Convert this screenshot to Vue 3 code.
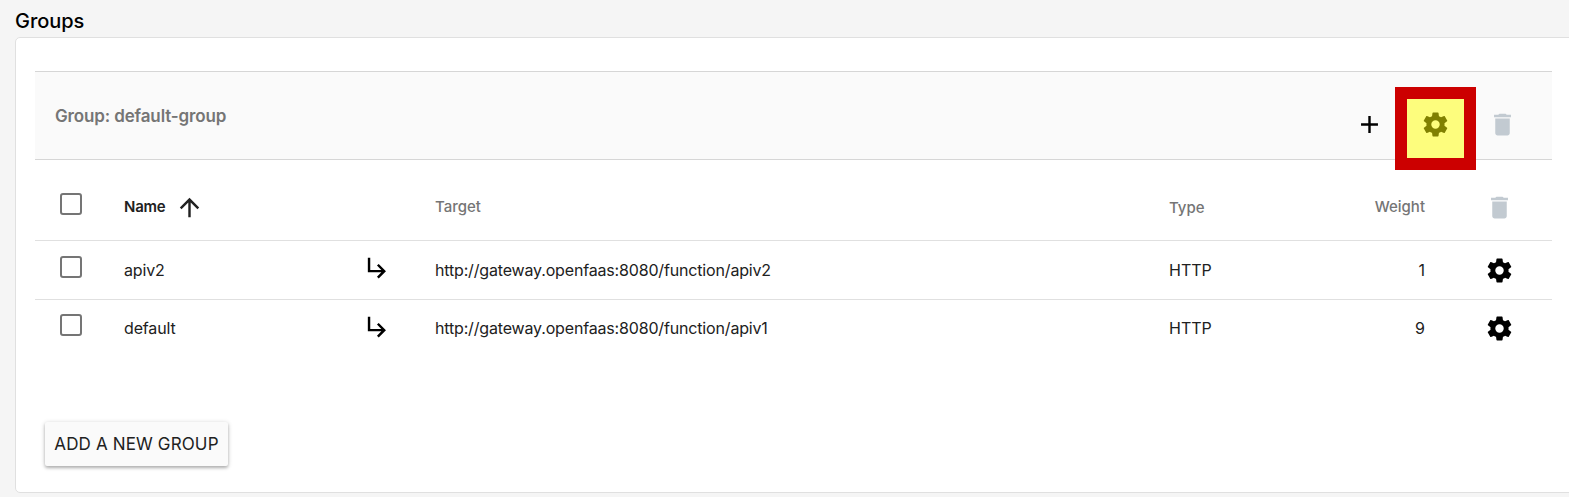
<script setup>
const icons = {
  plus: 'M19 13h-6v6h-2v-6H5v-2h6V5h2v6h6v2z',
  trash: 'M6 19c0 1.1.9 2 2 2h8c1.1 0 2-.9 2-2V7H6v12zM19 4h-3.5l-1-1h-5l-1 1H5v2h14V4z',
  up: 'M4 12l1.41 1.41L11 7.83V20h2V7.83l5.58 5.59L20 12l-8-8-8 8z',
  sub: 'M19 15l-6 6-1.42-1.42L15.17 16H4V4h2v10h9.17l-3.59-3.58L13 9l6 6z',
  cog: 'M12,15.5A3.5,3.5 0 0,1 8.5,12A3.5,3.5 0 0,1 12,8.5A3.5,3.5 0 0,1 15.5,12A3.5,3.5 0 0,1 12,15.5M19.43,12.97C19.47,12.65 19.5,12.33 19.5,12C19.5,11.67 19.47,11.34 19.43,11L21.54,9.37C21.73,9.22 21.78,8.95 21.66,8.73L19.66,5.27C19.54,5.05 19.27,4.96 19.05,5.05L16.56,6.05C16.04,5.66 15.5,5.32 14.87,5.07L14.5,2.42C14.46,2.18 14.25,2 14,2H10C9.75,2 9.54,2.18 9.5,2.42L9.13,5.07C8.5,5.32 7.96,5.66 7.44,6.05L4.95,5.05C4.73,4.96 4.46,5.05 4.34,5.27L2.34,8.73C2.21,8.95 2.27,9.22 2.46,9.37L4.57,11C4.53,11.34 4.5,11.67 4.5,12C4.5,12.33 4.53,12.65 4.57,12.97L2.46,14.63C2.27,14.78 2.21,15.05 2.34,15.27L4.34,18.73C4.46,18.95 4.73,19.03 4.95,18.95L7.44,17.94C7.96,18.34 8.5,18.68 9.13,18.93L9.5,21.58C9.54,21.82 9.75,22 10,22H14C14.25,22 14.46,21.82 14.5,21.58L14.87,18.93C15.5,18.67 16.04,18.34 16.56,17.94L19.05,18.95C19.27,19.03 19.54,18.95 19.66,18.73L21.66,15.27C21.78,15.05 21.73,14.78 21.54,14.63L19.43,12.97Z',
}
const rows = [
  { name: 'apiv2', target: 'http://gateway.openfaas:8080/function/apiv2', type: 'HTTP', weight: 1 },
  { name: 'default', target: 'http://gateway.openfaas:8080/function/apiv1', type: 'HTTP', weight: 9 },
]
</script>

<template>
  <main class="page">
    <h1 class="title"><span>Groups</span></h1>
    <section class="card">
      <header class="band">
        <h2 class="band-title"><span>Group: default-group</span></h2>
        <div class="actions">
          <svg class="icon" viewBox="0 0 24 24"><path :d="icons.plus" /></svg>
          <div class="cog-slot">
            <svg class="icon" viewBox="0 0 24 24"><path :d="icons.cog" /></svg>
            <div class="highlight"></div>
          </div>
          <svg class="icon disabled" viewBox="0 0 24 24"><path :d="icons.trash" /></svg>
        </div>
      </header>

      <div class="row head">
        <div class="check"></div>
        <div class="sorted">
          <span class="label">Name</span>
          <svg class="icon dark" viewBox="0 0 24 24"><path :d="icons.up" /></svg>
        </div>
        <div></div>
        <div>Target</div>
        <div class="type">Type</div>
        <div class="weight">Weight</div>
        <div class="end"><svg class="icon disabled" viewBox="0 0 24 24"><path :d="icons.trash" /></svg></div>
      </div>

      <div v-for="r in rows" :key="r.name" class="row item">
        <div class="check"></div>
        <div class="name">{{ r.name }}</div>
        <svg class="icon sub" viewBox="0 0 24 24"><path :d="icons.sub" /></svg>
        <div class="url">{{ r.target }}</div>
        <div>{{ r.type }}</div>
        <div class="weight">{{ r.weight }}</div>
        <div class="end"><svg class="icon" viewBox="0 0 24 24"><path :d="icons.cog" /></svg></div>
      </div>

      <button class="add">ADD A NEW GROUP</button>
    </section>
  </main>
</template>

<style>
body { background: #f5f5f5; overflow: hidden; }
</style>

<style scoped>
.page {
  box-sizing: border-box;
  width: 1569px;
  height: 497px;
  padding-left: 15px;
  overflow: hidden;
  background: #f5f5f5;
  font-family: Inter, "Liberation Sans", sans-serif;
  font-size: 16px;
  color: #212121;
}
.title {
  margin: 0;
  height: 37px;
  line-height: 43px;
  font-size: 20px;
  font-weight: 500;
  letter-spacing: -0.05px;
  color: #000;
}
.card {
  box-sizing: border-box;
  width: 1600px;
  height: 456px;
  padding: 33px 0 0 19px;
  border: 1px solid #e0e0e0;
  border-radius: 5px;
  background: #fff;
}
.band {
  box-sizing: border-box;
  display: flex;
  justify-content: space-between;
  width: 1517px;
  height: 89px;
  padding: 0 35px 0 20px;
  border: solid #d6d6d6;
  border-width: 1px 0;
  background: #fafafa;
}
.band-title {
  margin: 0;
  line-height: 89px;
  font-size: 17px;
  font-weight: 600;
  letter-spacing: -0.14px;
  color: #757575;
}
.actions { display: flex; gap: 37px; padding-top: 38px; }
.icon { display: block; width: 29px; height: 29px; fill: #000; flex: none; }
.disabled { fill: #c2cad1; }
.dark { fill: #212121; }
.cog-slot { position: relative; margin-right: 1px; }
.highlight {
  position: absolute;
  box-sizing: border-box;
  left: -26px;
  top: -22.6px;
  width: 81px;
  height: 83px;
  border: 12px solid #cc0000;
  background: rgba(255, 255, 0, 0.5);
}
.row {
  box-sizing: border-box;
  display: grid;
  grid-template-columns: 89px 238px 73px 734px 168px 88px 127px;
  width: 1517px;
  border-bottom: 1px solid #e0e0e0;
}
.head {
  height: 81px;
  line-height: 94px;
  font-size: 15px;
  font-weight: 500;
  color: #757575;
}
.item { height: 59px; line-height: 59px; }
.item + .item { height: 58px; line-height: 57px; border-bottom: 0; }
.check {
  box-sizing: border-box;
  width: 22px;
  height: 22px;
  margin: 15px 0 0 25px;
  border: 2px solid #757575;
  border-radius: 3px;
}
.head .check { margin-top: 33px; }
.item + .item .check { margin-top: 14px; }
.sorted { display: flex; gap: 9px; color: #212121; font-weight: 600; }
.sorted .icon { margin-top: 33px; }
.label { width: 42px; white-space: nowrap; letter-spacing: -0.25px; }
.name { letter-spacing: -0.15px; }
.url { letter-spacing: -0.165px; }
.type { padding-top: 1px; }
.weight { text-align: right; }
.end { padding-left: 60px; }
.head .end { padding-top: 33px; }
.item .end { padding-top: 15px; }
.item + .item .end { padding-top: 14px; }
.sub { margin: 12px 0 0 1px; }
.add {
  display: block;
  box-sizing: border-box;
  width: 183px;
  height: 44px;
  margin: 64px 0 0 10px;
  padding: 0;
  border: 0;
  border-radius: 2px;
  background: #fafafa;
  box-shadow: 0 1px 5px rgba(0, 0, 0, 0.2), 0 2px 3px rgba(0, 0, 0, 0.2);
  font: inherit;
  font-size: 17px;
  line-height: 45px;
  letter-spacing: 0.14px;
  color: #212121;
  white-space: nowrap;
}
</style>
